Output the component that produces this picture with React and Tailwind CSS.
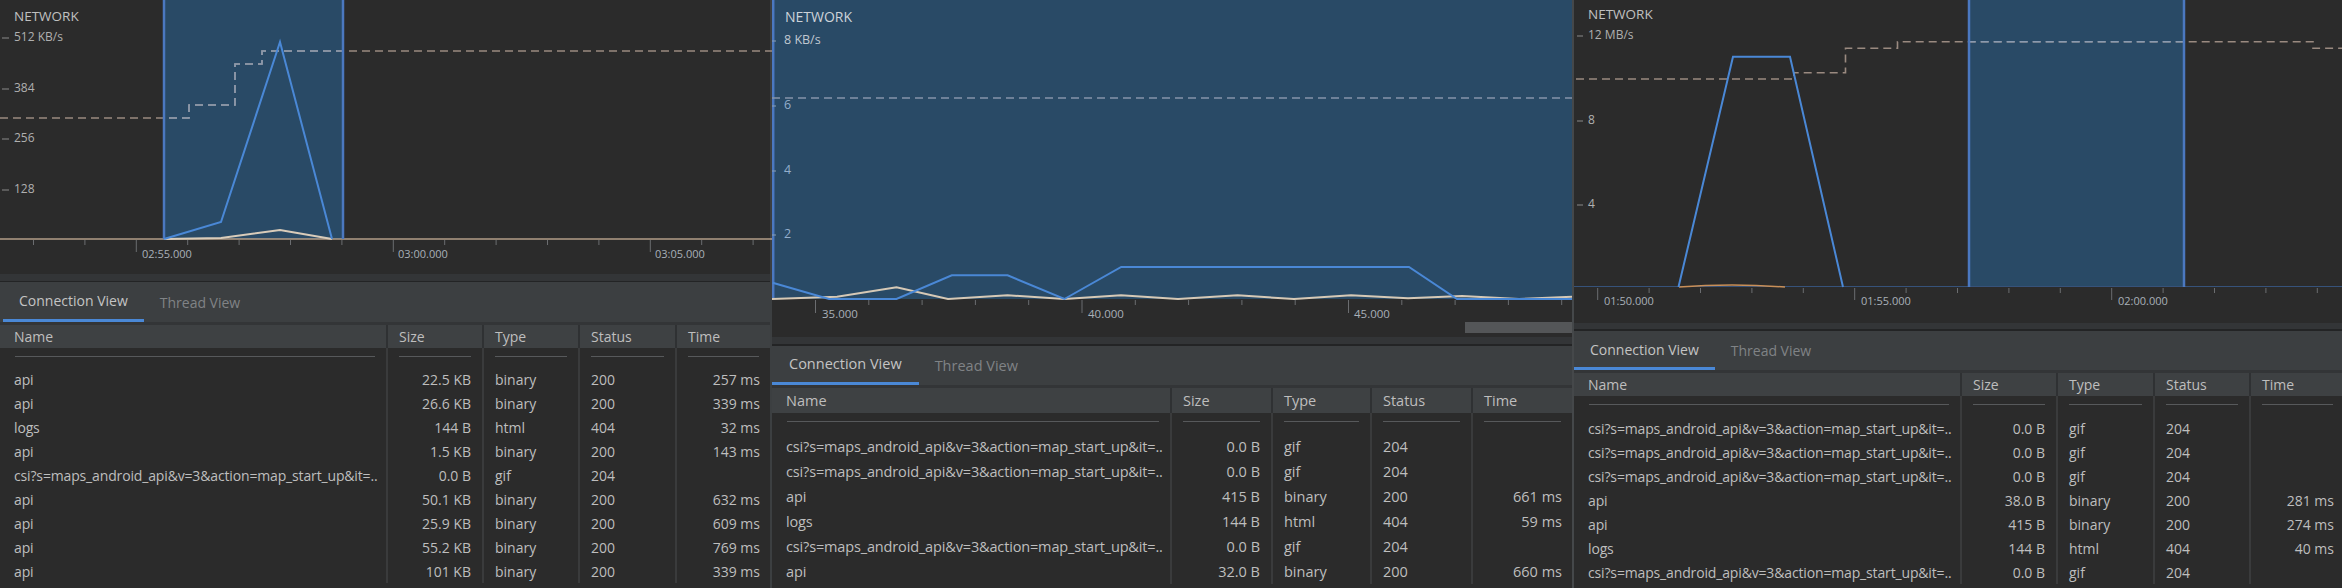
import React from 'react';

const CSI = 'csi?s=maps_android_api&v=3&action=map_start_up&it=..';

const p1Rows = [
  ['api', '22.5 KB', 'binary', '200', '257 ms'],
  ['api', '26.6 KB', 'binary', '200', '339 ms'],
  ['logs', '144 B', 'html', '404', '32 ms'],
  ['api', '1.5 KB', 'binary', '200', '143 ms'],
  [CSI, '0.0 B', 'gif', '204', ''],
  ['api', '50.1 KB', 'binary', '200', '632 ms'],
  ['api', '25.9 KB', 'binary', '200', '609 ms'],
  ['api', '55.2 KB', 'binary', '200', '769 ms'],
  ['api', '101 KB', 'binary', '200', '339 ms'],
];

const p2Rows = [
  [CSI, '0.0 B', 'gif', '204', ''],
  [CSI, '0.0 B', 'gif', '204', ''],
  ['api', '415 B', 'binary', '200', '661 ms'],
  ['logs', '144 B', 'html', '404', '59 ms'],
  [CSI, '0.0 B', 'gif', '204', ''],
  ['api', '32.0 B', 'binary', '200', '660 ms'],
];

const p3Rows = [
  [CSI, '0.0 B', 'gif', '204', ''],
  [CSI, '0.0 B', 'gif', '204', ''],
  [CSI, '0.0 B', 'gif', '204', ''],
  ['api', '38.0 B', 'binary', '200', '281 ms'],
  ['api', '415 B', 'binary', '200', '274 ms'],
  ['logs', '144 B', 'html', '404', '40 ms'],
  [CSI, '0.0 B', 'gif', '204', ''],
];

// x-axis tick marks, every 5th one is a long one
function ticks(start, step, count, first, top, minorLen, majorLen) {
  const out = [];
  for (let i = 0; i < count; i++) {
    const x = start + i * step;
    const major = i % 5 === first;
    out.push(
      <line key={i} x1={x} x2={x} y1={top} y2={top + (major ? majorLen : minorLen)} stroke="#6b6d70" strokeWidth="1" />
    );
  }
  return out;
}

function Chart1() {
  const dash = 'M0 118 H189 V105 H235 V64 H262 V51 H772';
  return (
    <svg width="772" height="274" className="block">
      <defs>
        <clipPath id="sel1">
          <rect x="164" y="0" width="179" height="239" />
        </clipPath>
      </defs>
      <rect x="164" y="0" width="179" height="239" fill="#294a66" />
      <text x="14" y="17" fontSize="13.5" fill="#c0c0c0" dominantBaseline="middle">NETWORK</text>
      {[[38, '512 KB/s'], [89, '384'], [139, '256'], [190, '128']].map(([y, t]) => (
        <g key={t}>
          <line x1="2" x2="9" y1={y} y2={y} stroke="#8a8a8a" />
          <text x="14" y={y} fontSize="12" fill="#b0b0b0" dominantBaseline="middle">{t}</text>
        </g>
      ))}
      <path d={dash} fill="none" stroke="#9a8a80" strokeWidth="1.6" strokeDasharray="8 5" />
      <path d={dash} fill="none" stroke="#8a9ab0" strokeWidth="1.6" strokeDasharray="8 5" clipPath="url(#sel1)" />
      <line x1="0" x2="772" y1="239" y2="239" stroke="#b39e88" strokeWidth="1.5" />
      <line x1="164" x2="164" y1="0" y2="239" stroke="#4b78c0" strokeWidth="2.5" />
      <line x1="343" x2="343" y1="0" y2="239" stroke="#4b78c0" strokeWidth="2.5" />
      <path d="M164 239 L221 238 L280 230 L332 239" fill="none" stroke="#d9ccba" strokeWidth="2" />
      <path d="M164 239 L221 222 L280 42 L332 239" fill="none" stroke="#4a88d6" strokeWidth="2" />
      {ticks(33.5, 51.4, 15, 2, 240, 5, 12)}
      {[[142, '02:55.000'], [398, '03:00.000'], [655, '03:05.000']].map(([x, t]) => (
        <text key={t} x={x} y="255" fontSize="11" fill="#a9b0b8" dominantBaseline="middle">{t}</text>
      ))}
    </svg>
  );
}

function Chart2() {
  const blue = 'M0.6 282.7 L57 299 L124.5 299 L179.8 275.3 L235.6 275.3 L292.4 299 L349.2 267 L637 267 L685 299 H800';
  const beige = 'M0 299 L65 296.7 L124.5 287.3 L176 299 L235.6 295.3 L292.4 299 L349 295.3 L406 299 L465.5 295.3 L522 299 L579 295.3 L636 298.3 L690 296 L747 299 L800 296.7';
  return (
    <svg width="800" height="337" className="block">
      <rect x="0" y="0" width="800" height="299" fill="#294a66" />
      <line x1="1.2" x2="1.2" y1="0" y2="299" stroke="#4b78c0" strokeWidth="2.5" />
      <text x="13" y="18" fontSize="14" fill="#cdd3d9" dominantBaseline="middle">NETWORK</text>
      <line x1="0" x2="4" y1="41" y2="41" stroke="#8aa0b8" />
      <text x="12" y="41" fontSize="12.5" fill="#c0c8d0" dominantBaseline="middle">8 KB/s</text>
      {[[106, '6'], [171, '4'], [235, '2']].map(([y, t]) => (
        <g key={t}>
          <line x1="0" x2="4" y1={y} y2={y} stroke="#8aa0b8" />
          <text x="12" y={y} fontSize="12.5" fill="#93aecb" dominantBaseline="middle">{t}</text>
        </g>
      ))}
      <path d="M0 98 H800" stroke="#8594aa" strokeWidth="1.6" strokeDasharray="8 5" />
      <path d={beige} fill="none" stroke="#d6c9b6" strokeWidth="2" />
      <path d={blue} fill="none" stroke="#4a88d6" strokeWidth="2" />
      {ticks(43.5, 53.3, 15, 0, 300, 5, 13)}
      {[[50, '35.000'], [316, '40.000'], [582, '45.000']].map(([x, t]) => (
        <text key={t} x={x} y="315" fontSize="11.5" fill="#a9b0b8" dominantBaseline="middle">{t}</text>
      ))}
      <rect x="693" y="322" width="107" height="11" fill="#545658" />
    </svg>
  );
}

function Chart3() {
  const dash = 'M2 79 H220 V72.7 H271.5 V48.3 H323.5 V41.7 H739 V48.3 H770';
  return (
    <svg width="770" height="323" className="block">
      <defs>
        <clipPath id="sel3">
          <rect x="395" y="0" width="215" height="287" />
        </clipPath>
      </defs>
      <rect x="395" y="0" width="215" height="287" fill="#294a66" />
      <text x="14" y="15" fontSize="13.5" fill="#c0c0c0" dominantBaseline="middle">NETWORK</text>
      {[[36, '12 MB/s'], [121, '8'], [205, '4']].map(([y, t]) => (
        <g key={t}>
          <line x1="3" x2="9" y1={y} y2={y} stroke="#8a8a8a" />
          <text x="14" y={y} fontSize="12" fill="#b0b0b0" dominantBaseline="middle">{t}</text>
        </g>
      ))}
      <path d={dash} fill="none" stroke="#9a8a80" strokeWidth="1.6" strokeDasharray="8 5" />
      <path d={dash} fill="none" stroke="#8a9ab0" strokeWidth="1.6" strokeDasharray="8 5" clipPath="url(#sel3)" />
      <line x1="0" x2="770" y1="286.5" y2="286.5" stroke="#36527a" strokeWidth="1.2" />
      <path d="M105 287 Q158 283 211 287" fill="none" stroke="#c98f58" strokeWidth="1.5" />
      <line x1="395" x2="395" y1="0" y2="287" stroke="#4b78c0" strokeWidth="2.5" />
      <line x1="610" x2="610" y1="0" y2="287" stroke="#4b78c0" strokeWidth="2.5" />
      <path d="M104.5 287 L159 56.7 L216 56.7 L269 287" fill="none" stroke="#4a88d6" strokeWidth="2" />
      {ticks(23.7, 51.4, 15, 0, 288, 5, 12)}
      {[[30, '01:50.000'], [287, '01:55.000'], [544, '02:00.000']].map(([x, t]) => (
        <text key={t} x={x} y="302" fontSize="11" fill="#a9b0b8" dominantBaseline="middle">{t}</text>
      ))}
    </svg>
  );
}

function Tabs({ bar, active }) {
  return (
    <div className={bar}>
      <div className={active}>Connection View</div>
      <div className="flex items-center px-4 text-[#808386]">Thread View</div>
    </div>
  );
}

function Table({ cols, rows, headH, spacerH, rowH }) {
  const names = ['Name', 'Size', 'Type', 'Status', 'Time'];
  return (
    <div className="flex-1 bg-[#2b2b2b] overflow-hidden">
      <div className={`grid ${cols} ${headH} bg-[#3e4143]`}>
        {names.map((n, i) => (
          <div key={n} className={i === 0 ? 'flex items-center pl-[14px]' : 'flex items-center pl-[11px] border-l-2 border-[#2f3133]'}>{n}</div>
        ))}
      </div>
      <div className={`grid ${cols} ${spacerH}`}>
        {names.map((n, i) => (
          <div key={n} className={i === 0 ? 'pt-[8px] pl-[15px] pr-[11px]' : 'pt-[8px] pl-[11px] pr-[11px] border-l-2 border-[#3a3b3c]'}>
            <div className="h-px bg-[#57595b]" />
          </div>
        ))}
      </div>
      {rows.map((r, ri) => (
        <div key={ri} className={`grid ${cols} ${rowH}`}>
          <div className="flex items-center pl-[14px] whitespace-nowrap tracking-[-0.15px]">{r[0]}</div>
          <div className="flex items-center justify-end pr-[11px] border-l-2 border-[#3a3b3c]">{r[1]}</div>
          <div className="flex items-center pl-[11px] border-l-2 border-[#3a3b3c]">{r[2]}</div>
          <div className="flex items-center pl-[11px] border-l-2 border-[#3a3b3c]">{r[3]}</div>
          <div className="flex items-center justify-end pr-[10px] border-l-2 border-[#3a3b3c]">{r[4]}</div>
        </div>
      ))}
    </div>
  );
}

function Splitter({ band, line }) {
  return (
    <>
      <div className={band} />
      <div className={line} />
    </>
  );
}

export default function App() {
  return (
    <div className="flex w-[2342px] h-[588px] overflow-hidden bg-[#2b2b2b] text-[14px] text-[#bebebe] font-['Open_Sans','Liberation_Sans',sans-serif]">
      <div className="flex flex-col w-[772px] shrink-0 border-r-2 border-[#3c3f41]">
        <Chart1 />
        <Splitter band="h-[7px] bg-[#333537]" line="h-[1px] bg-[#232425]" />
        <Tabs
          bar="flex h-[40px] pl-[3px] bg-[#3c3f41]"
          active="flex items-center px-4 border-b-[3px] border-[#4a88d6] text-[#c4c4c4]"
        />
        <div className="h-[3px] bg-[#333537]" />
        <Table cols="grid-cols-[386px_96px_96px_97px_1fr]" rows={p1Rows} headH="h-[23px]" spacerH="h-[19px]" rowH="h-[24px]" />
      </div>
      <div className="flex flex-col w-[800px] shrink-0 text-[14.5px]">
        <Chart2 />
        <Splitter band="h-[7px] bg-[#333537]" line="h-[2px] bg-[#232425]" />
        <Tabs
          bar="flex h-[39px] bg-[#3c3f41]"
          active="flex items-center px-[17px] border-b-[3px] border-[#4a88d6] text-[#c4c4c4]"
        />
        <div className="h-[3px] bg-[#333537]" />
        <Table cols="grid-cols-[398px_101px_99px_101px_1fr]" rows={p2Rows} headH="h-[25px]" spacerH="h-[21px]" rowH="h-[25px]" />
      </div>
      <div className="flex flex-col flex-1 border-l-2 border-[#45484a]">
        <Chart3 />
        <Splitter band="h-[6px] bg-[#333537]" line="h-[2px] bg-[#232425]" />
        <Tabs
          bar="flex h-[39px] bg-[#3c3f41]"
          active="flex items-center px-4 border-b-[3px] border-[#4a88d6] text-[#c4c4c4]"
        />
        <div className="h-[3px] bg-[#333537]" />
        <Table cols="grid-cols-[386px_96px_97px_96px_1fr]" rows={p3Rows} headH="h-[23px]" spacerH="h-[20px]" rowH="h-[24px]" />
      </div>
    </div>
  );
}
